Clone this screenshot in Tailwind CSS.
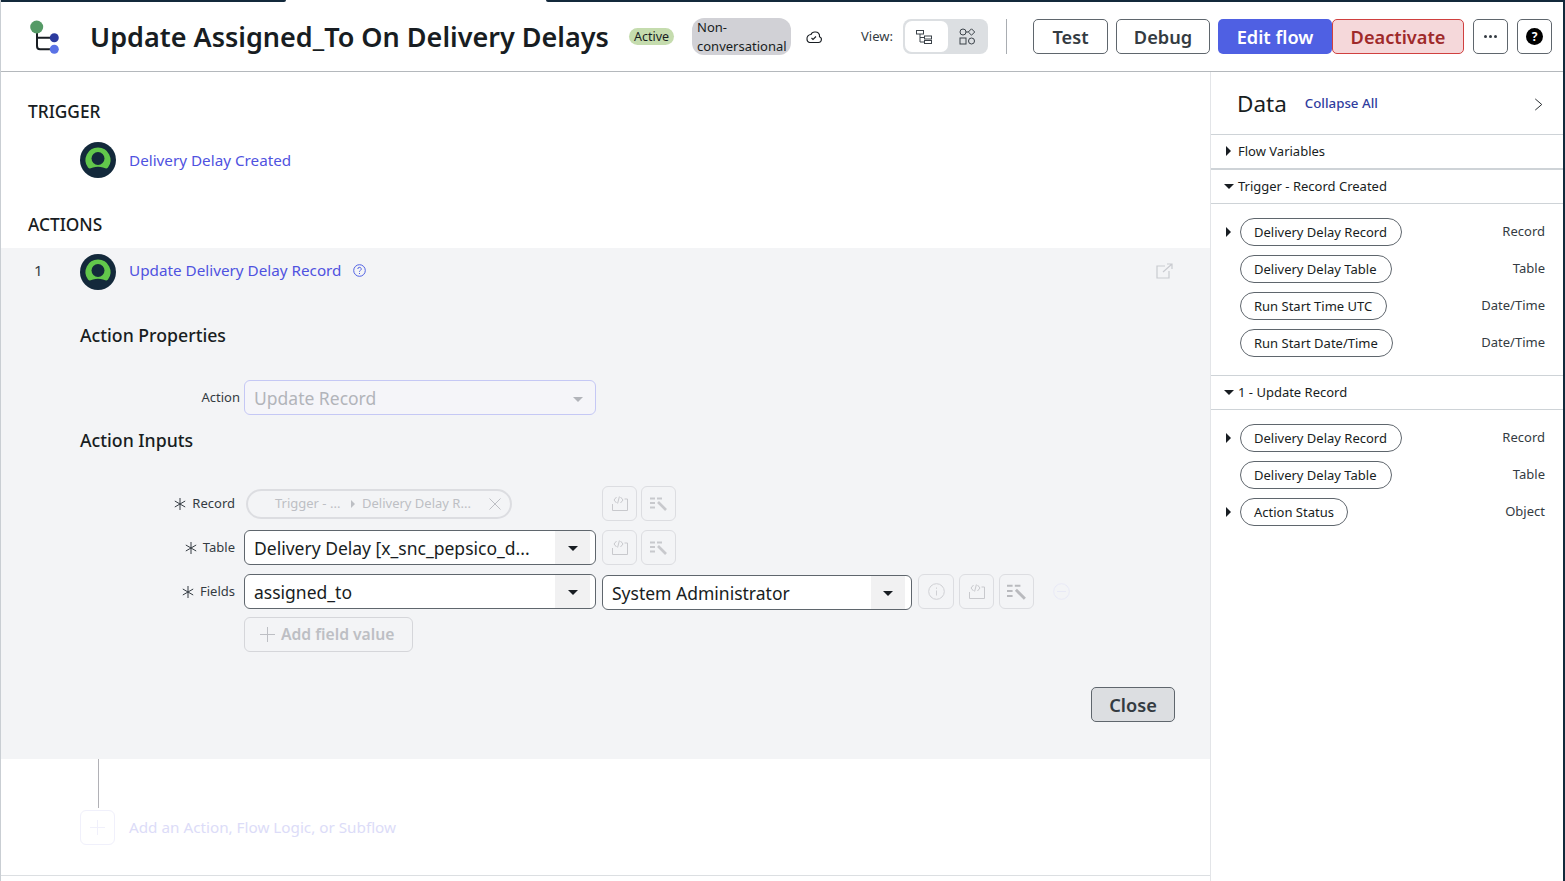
<!DOCTYPE html>
<html lang="en">
<head>
    <meta charset="UTF-8">
    <title>Update Assigned_To On Delivery Delays</title>
    <script src="https://cdn.jsdelivr.net/npm/@tailwindcss/browser@4"></script>
</head>
<body class="bg-white overflow-hidden font-['Noto_Sans',sans-serif] text-[#181d22]">
    <!-- shared icons -->
    <svg class="hidden">
        <symbol id="record-icon" viewBox="0 0 36 36">
            <circle cx="18" cy="18" r="18" fill="#13293b"/>
            <path d="M18 5.500a12.500 12.500 0 0 1 10 20c-1.500 1.800-3.500 0.500-5 0-3-1-7-1-10 0-1.500 0.500-3.500 1.800-5 0a12.500 12.500 0 0 1 10-20z" fill="#62c74b"/>
            <circle cx="18" cy="16.500" r="6.500" fill="#13293b"/>
        </symbol>
        <symbol id="code-icon" viewBox="0 0 16 15" fill="none" stroke="currentColor" stroke-width="1">
            <path d="M.5 8v6.500h15V3h-3"/>
            <path d="M4.500 1 2 4l2.500 3M8.500 1 11 4 8.500 7M7.400.5 5.600 7.500"/>
        </symbol>
        <symbol id="wizard-icon" viewBox="0 0 17 14" fill="none" stroke="currentColor" stroke-width="1.800">
            <path d="M0 1.500h5M7 1.500h5M0 6h5M0 10.500h5"/>
            <path d="M8 5l8 8" stroke-width="2.600"/>
        </symbol>
        <symbol id="required-icon" viewBox="0 0 12 12" fill="none" stroke="#343b42" stroke-width="1">
            <path d="M6 0v12M.8 3l10.400 6M.8 9l10.400-6"/>
        </symbol>
    </svg>

    <div class="relative h-[881px] w-[1565px] flex flex-col border-l border-[#c9ced3] border-r-2 border-r-[#13293b]">
        <div class="absolute top-0 left-0 w-[285px] h-[2px] bg-[#13293b] rounded-br"></div>
        <div class="absolute top-0 left-[545px] right-0 h-[2px] bg-[#13293b] rounded-bl"></div>

        <!-- Header -->
        <header class="h-[72px] shrink-0 border-b border-[#b4b8bc] flex items-center pt-[2px]">
            <svg class="ml-[28px] w-[32px] h-[36px] shrink-0" viewBox="0 0 32 36" fill="none">
                <path d="M8 8v19q0 3.300 3 3.300h12M8 18.700h14" stroke="#181d22" stroke-width="2"/>
                <circle cx="7.700" cy="8" r="6.500" fill="#559a66"/>
                <circle cx="25.300" cy="18.700" r="4.500" fill="#2b3a9e"/>
                <circle cx="25.300" cy="30.300" r="4.500" fill="#5a72e6"/>
            </svg>
            <h1 class="ml-[29px] text-[27px] leading-[36px] font-semibold whitespace-nowrap w-[539px] shrink-0 mt-[1px]">Update Assigned_To On Delivery Delays</h1>
            <span class="h-[17px] w-[45px] shrink-0 rounded-full bg-[#c5dcae] text-[12.500px] leading-[17px] text-center">Active</span>
            <span class="ml-[18px] h-[37px] w-[99px] shrink-0 rounded-[12px] bg-[#d1d1d6] pl-[5px] text-[13px] leading-[19px]">Non-<br>conversational</span>
            <svg class="ml-[14px] w-[18px] h-[14px] shrink-0" viewBox="0 0 18 14" fill="none" stroke="#181d22" stroke-width="1.100">
                <path d="M4 12.500h9.500a3 3 0 0 0 1-5.800 4 4 0 0 0-4.500-4.700 4 4 0 0 0-4 2.500 4 4 0 0 0-4 4.500 3.500 3.500 0 0 0 2.500 3.500z"/>
                <path d="M6.500 8l1.500 1.500 3-3"/>
            </svg>
            <span class="ml-[38px] text-[13px] w-[42px] shrink-0 text-[#343b42]">View:</span>
            <div class="h-[35px] w-[85px] shrink-0 rounded-[8px] bg-[#dcdfe2] p-[2px] flex">
                <div class="w-[43px] rounded-[7px] bg-white flex items-center justify-center pr-[6px]">
                    <svg class="w-[16px] h-[16px]" viewBox="0 0 16 16" fill="none" stroke="#3b4249" stroke-width="1">
                        <rect x="0.500" y="1.500" width="7" height="3.500"/>
                        <rect x="8.500" y="7" width="7" height="3"/>
                        <rect x="8.500" y="11.500" width="7" height="3"/>
                        <path d="M4 5v8h4.500M4 8.500h4.500"/>
                    </svg>
                </div>
                <div class="flex-1 flex items-center justify-center">
                    <svg class="w-[17px] h-[17px]" viewBox="0 0 17 17" fill="none" stroke="#3b4249" stroke-width="1">
                        <circle cx="4" cy="4" r="3"/>
                        <path d="M12.500 0.800l3.200 3.200-3.200 3.200-3.200-3.200zM7 4h2.300"/>
                        <rect x="1" y="10" width="6" height="6"/>
                        <circle cx="12.500" cy="13" r="3"/>
                    </svg>
                </div>
            </div>
            <div class="ml-[18px] h-[35px] w-px shrink-0 bg-[#a9adb2]"></div>
            <button class="ml-[26px] h-[35px] w-[75px] pt-[2px] shrink-0 rounded-[5px] border border-[#5f666d] text-[18.200px] font-semibold text-[#343b42]">Test</button>
            <button class="ml-[8px] h-[35px] w-[94px] pt-[2px] shrink-0 rounded-[5px] border border-[#5f666d] text-[18.200px] font-semibold text-[#343b42]">Debug</button>
            <button class="ml-[8px] h-[35px] w-[114px] pt-[2px] shrink-0 rounded-[5px] bg-[#4f60e3] text-[18.200px] font-semibold text-white">Edit flow</button>
            <button class="h-[35px] w-[132px] pt-[2px] shrink-0 rounded-[5px] border border-[#d0403f] bg-[#f5d8da] text-[18.200px] font-semibold text-[#9f2a2a]">Deactivate</button>
            <button class="ml-[9px] h-[35px] w-[35px] shrink-0 rounded-[5px] border border-[#5f666d] flex items-center justify-center gap-[2px]">
                <span class="w-[3px] h-[3px] rounded-full bg-[#343b42]"></span>
                <span class="w-[3px] h-[3px] rounded-full bg-[#343b42]"></span>
                <span class="w-[3px] h-[3px] rounded-full bg-[#343b42]"></span>
            </button>
            <button class="ml-[9px] h-[35px] w-[35px] shrink-0 rounded-[5px] border border-[#5f666d] flex items-center justify-center">
                <span class="w-[17px] h-[17px] rounded-full bg-black text-white text-[12px] leading-[17px] font-bold text-center">?</span>
            </button>
        </header>

        <div class="flex flex-1 min-h-0">
            <!-- Flow canvas -->
            <main class="w-[1209px] shrink-0">
                <h2 class="ml-[27px] mt-[28px] text-[17.300px] leading-[24px] font-medium">TRIGGER</h2>
                <div class="ml-[79px] mt-[18px] flex items-center h-[36px]">
                    <svg class="w-[36px] h-[36px]"><use href="#record-icon"/></svg>
                    <a class="ml-[13px] text-[15.250px] text-[#4f52e0]">Delivery Delay Created</a>
                </div>
                <h2 class="ml-[27px] mt-[35px] text-[17.300px] leading-[24px] font-medium">ACTIONS</h2>

                <section class="mt-[11px] h-[511px] bg-[#f3f4f6] pt-[6px]">
                    <div class="flex items-center h-[36px]">
                        <span class="ml-[33px] w-[46px] text-[15.250px] text-[#343b42] -mt-[3px]">1</span>
                        <svg class="w-[36px] h-[36px]"><use href="#record-icon"/></svg>
                        <a class="ml-[13px] text-[15.250px] text-[#4f52e0] -mt-[4px]">Update Delivery Delay Record</a>
                        <svg class="ml-[11px] w-[13px] h-[13px] -mt-[4px]" viewBox="0 0 13 13" fill="none" stroke="#4f60e3">
                            <circle cx="6.500" cy="6.500" r="5.800" stroke-width="1"/>
                            <path d="M4.800 5a1.700 1.700 0 1 1 2.500 1.500q-.8.500-.8 1.300M6.500 9v1" stroke-width="1"/>
                        </svg>
                        <svg class="ml-auto mr-[37px] w-[17px] h-[16px] -mt-[2px]" viewBox="0 0 17 16" fill="none" stroke="#c9cbd0" stroke-width="1.200">
                            <path d="M9 3H1v12h12V8M7 9l9-8M11 1h5v5"/>
                        </svg>
                    </div>

                    <h3 class="ml-[79px] mt-[32px] text-[17.700px] leading-[26px] font-medium">Action Properties</h3>

                    <div class="mt-[32px] flex items-center">
                        <label class="w-[243px] text-right text-[13px] pr-[4px] pt-[1px] text-[#343b42]">Action</label>
                        <div class="w-[352px] h-[35px] rounded-[6px] border border-[#c5c8f5] bg-[#f5f5f9] flex items-center pl-[9px] pr-[12px] text-[17.500px] text-[#b2b4ba]">
                            <span class="flex-1 pt-[1px]">Update Record</span>
                            <span class="w-0 h-0 border-x-[5px] border-x-transparent border-t-[5px] border-t-[#b2b4ba] mt-[3px]"></span>
                        </div>
                    </div>

                    <h3 class="ml-[79px] mt-[12px] text-[17.700px] leading-[26px] font-medium">Action Inputs</h3>

                    <!-- Record -->
                    <div class="mt-[33px] flex items-center h-[35px]">
                        <label class="w-[234px] flex items-center justify-end gap-[6px] text-[13px] text-[#343b42]"><svg class="w-[12px] h-[12px]"><use href="#required-icon"/></svg>Record</label>
                        <div class="ml-[11px] w-[266px] h-[30px] rounded-full border-2 border-[#dcdde1] flex items-center pl-[27px] text-[13px] text-[#bdbfc4]">
                            <span class="w-[76px]">Trigger - ...</span>
                            <span class="w-0 h-0 border-y-[4px] border-y-transparent border-l-[4px] border-l-[#bdbfc4] mr-[7px]"></span>
                            <span class="w-[127px] whitespace-nowrap">Delivery Delay R...</span>
                            <svg class="w-[12px] h-[12px]" viewBox="0 0 12 12" stroke="#bdbfc4" stroke-width="1"><path d="M0.500 0.500l11 11M11.500 0.500l-11 11"/></svg>
                        </div>
                        <div class="ml-[90px] flex gap-[4px]">
                            <div class="w-[35px] h-[35px] rounded-[6px] border border-[#dcdde1] flex items-center justify-center text-[#c8c9cd]"><svg class="w-[16px] h-[15px]"><use href="#code-icon"/></svg></div>
                            <div class="w-[35px] h-[35px] rounded-[6px] border border-[#dcdde1] flex items-center justify-center text-[#c8c9cd]"><svg class="w-[17px] h-[14px]"><use href="#wizard-icon"/></svg></div>
                        </div>
                    </div>

                    <!-- Table -->
                    <div class="mt-[9px] flex items-center h-[35px]">
                        <label class="w-[234px] flex items-center justify-end gap-[6px] text-[13px] text-[#343b42]"><svg class="w-[12px] h-[12px]"><use href="#required-icon"/></svg>Table</label>
                        <div class="ml-[9px] w-[352px] h-[35px] rounded-[6px] border border-[#5f666d] bg-white flex overflow-hidden pr-[5px]">
                            <span class="flex-1 pl-[9px] text-[17.500px] leading-[35px] whitespace-nowrap">Delivery Delay [x_snc_pepsico_d...</span>
                            <span class="w-[35px] bg-[#f1f1f2] flex items-center justify-center"><span class="w-0 h-0 border-x-[5px] border-x-transparent border-t-[5px] border-t-[#181d22] mt-[2px]"></span></span>
                        </div>
                        <div class="ml-[6px] flex gap-[4px]">
                            <div class="w-[35px] h-[35px] rounded-[6px] border border-[#dcdde1] flex items-center justify-center text-[#c8c9cd]"><svg class="w-[16px] h-[15px]"><use href="#code-icon"/></svg></div>
                            <div class="w-[35px] h-[35px] rounded-[6px] border border-[#dcdde1] flex items-center justify-center text-[#c8c9cd]"><svg class="w-[17px] h-[14px]"><use href="#wizard-icon"/></svg></div>
                        </div>
                    </div>

                    <!-- Fields -->
                    <div class="mt-[9px] flex items-center h-[35px]">
                        <label class="w-[234px] flex items-center justify-end gap-[6px] text-[13px] text-[#343b42]"><svg class="w-[12px] h-[12px]"><use href="#required-icon"/></svg>Fields</label>
                        <div class="ml-[9px] w-[352px] h-[35px] rounded-[6px] border border-[#5f666d] bg-white flex overflow-hidden pr-[5px]">
                            <span class="flex-1 pl-[9px] text-[17.500px] leading-[35px]">assigned_to</span>
                            <span class="w-[35px] bg-[#f1f1f2] flex items-center justify-center"><span class="w-0 h-0 border-x-[5px] border-x-transparent border-t-[5px] border-t-[#181d22] mt-[2px]"></span></span>
                        </div>
                        <div class="ml-[6px] w-[310px] h-[35px] rounded-[6px] border border-[#5f666d] bg-white flex overflow-hidden pr-[6px] mt-[1px]">
                            <span class="flex-1 pl-[9px] text-[17.500px] leading-[35px]">System Administrator</span>
                            <span class="w-[34px] bg-[#f1f1f2] flex items-center justify-center"><span class="w-0 h-0 border-x-[5px] border-x-transparent border-t-[5px] border-t-[#181d22] mt-[2px]"></span></span>
                        </div>
                        <div class="ml-[6px] flex gap-[5px]">
                            <div class="w-[36px] h-[35px] rounded-[6px] border border-[#dcdde1] flex items-center justify-center">
                                <svg class="w-[17px] h-[17px]" viewBox="0 0 17 17" fill="none" stroke="#cfd0d4"><circle cx="8.500" cy="8.500" r="7.800"/><path d="M8.500 7.500v5M8.500 4.500v1.300"/></svg>
                            </div>
                            <div class="w-[35px] h-[35px] rounded-[6px] border border-[#dcdde1] flex items-center justify-center text-[#c8c9cd]"><svg class="w-[16px] h-[15px]"><use href="#code-icon"/></svg></div>
                            <div class="w-[35px] h-[35px] rounded-[6px] border border-[#dcdde1] flex items-center justify-center text-[#b9babe]"><svg class="w-[19px] h-[16px]"><use href="#wizard-icon"/></svg></div>
                        </div>
                        <svg class="ml-[19px] w-[17px] h-[17px]" viewBox="0 0 17 17" fill="none" stroke="#e8e9f6"><circle cx="8.500" cy="8.500" r="7.800"/><path d="M4 8.500h9"/></svg>
                    </div>

                    <button class="ml-[243px] mt-[8px] w-[169px] h-[35px] rounded-[6px] border border-[#d5d6da] flex items-center pl-[15px] text-[15.700px] font-semibold text-[#bdbfc4]">
                        <svg class="w-[15px] h-[15px] mr-[6px]" viewBox="0 0 15 15" stroke="#bdbfc4"><path d="M7.500 0v15M0 7.500h15"/></svg>Add field value
                    </button>

                    <div class="flex justify-end pr-[35px] mt-[35px]">
                        <button class="w-[84px] h-[35px] pt-[2px] rounded-[5px] border border-[#5f666d] bg-[#dcdee1] text-[18.200px] font-semibold text-[#343b42]">Close</button>
                    </div>
                </section>

                <div class="ml-[97px] w-px h-[49px] bg-[#b1b1b6]"></div>
                <div class="ml-[79px] mt-[2px] flex items-center">
                    <div class="w-[35px] h-[35px] rounded-[6px] border border-[#f0f0fb] flex items-center justify-center">
                        <svg class="w-[15px] h-[15px]" viewBox="0 0 15 15" stroke="#f0f0fb"><path d="M7.500 0v15M0 7.500h15"/></svg>
                    </div>
                    <span class="ml-[14px] -mt-[1px] text-[15.250px] text-[#dcdcf8]">Add an Action, Flow Logic, or Subflow</span>
                </div>
                <div class="mt-[30px] h-px bg-[#dcdfe2]"></div>
            </main>

            <!-- Data panel -->
            <aside class="flex-1 min-w-0 border-l border-[#e3e5e8] text-[13px]">
                <div class="h-[63px] border-b border-[#ced3d7] flex items-center pt-[2px]">
                    <span class="ml-[26px] text-[22.500px] text-[#181d22]">Data</span>
                    <a class="ml-[18px] text-[13.300px] font-medium text-[#2f3c9e]">Collapse All</a>
                    <svg class="ml-auto mr-[20px] w-[9px] h-[13px]" viewBox="0 0 9 14" fill="none" stroke="#181d22"><path d="M1 1l7 6-7 6"/></svg>
                </div>
                <div class="h-[35px] border-b-2 border-[#ced3d7] flex items-center pl-[15px]">
                    <span class="w-0 h-0 border-y-[5px] border-y-transparent border-l-[5px] border-l-[#181d22] mr-[7px] -mt-[1px]"></span>Flow Variables
                </div>
                <div class="h-[34px] border-b border-[#ced3d7] flex items-center pl-[13px]">
                    <span class="w-0 h-0 border-x-[5px] border-x-transparent border-t-[5px] border-t-[#181d22] mr-[4px] -mt-[1px]"></span>Trigger - Record Created
                </div>
                <div class="h-[172px] border-b border-[#ced3d7] pt-[14px] pr-[18px] flex flex-col gap-[9px]">
                    <div class="flex items-center h-[28px]">
                        <span class="ml-[15px] w-0 h-0 border-y-[5px] border-y-transparent border-l-[5px] border-l-[#181d22] mr-[9px] -mt-[1px]"></span>
                        <span class="h-[28px] w-[162px] rounded-full border border-[#5f666d] pl-[13px] leading-[26px] whitespace-nowrap">Delivery Delay Record</span>
                        <span class="ml-auto text-[#343b42]">Record</span>
                    </div>
                    <div class="flex items-center h-[28px]">
                        <span class="ml-[29px] h-[28px] w-[152px] rounded-full border border-[#5f666d] pl-[13px] leading-[26px] whitespace-nowrap">Delivery Delay Table</span>
                        <span class="ml-auto text-[#343b42]">Table</span>
                    </div>
                    <div class="flex items-center h-[28px]">
                        <span class="ml-[29px] h-[28px] w-[147px] rounded-full border border-[#5f666d] pl-[13px] leading-[26px] whitespace-nowrap">Run Start Time UTC</span>
                        <span class="ml-auto text-[#343b42]">Date/Time</span>
                    </div>
                    <div class="flex items-center h-[28px]">
                        <span class="ml-[29px] h-[28px] w-[153px] rounded-full border border-[#5f666d] pl-[13px] leading-[26px] whitespace-nowrap">Run Start Date/Time</span>
                        <span class="ml-auto text-[#343b42]">Date/Time</span>
                    </div>
                </div>
                <div class="h-[34px] border-b border-[#ced3d7] flex items-center pl-[13px]">
                    <span class="w-0 h-0 border-x-[5px] border-x-transparent border-t-[5px] border-t-[#181d22] mr-[4px] -mt-[1px]"></span>1 - Update Record
                </div>
                <div class="pt-[14px] pr-[18px] flex flex-col gap-[9px]">
                    <div class="flex items-center h-[28px]">
                        <span class="ml-[15px] w-0 h-0 border-y-[5px] border-y-transparent border-l-[5px] border-l-[#181d22] mr-[9px] -mt-[1px]"></span>
                        <span class="h-[28px] w-[162px] rounded-full border border-[#5f666d] pl-[13px] leading-[26px] whitespace-nowrap">Delivery Delay Record</span>
                        <span class="ml-auto text-[#343b42]">Record</span>
                    </div>
                    <div class="flex items-center h-[28px]">
                        <span class="ml-[29px] h-[28px] w-[152px] rounded-full border border-[#5f666d] pl-[13px] leading-[26px] whitespace-nowrap">Delivery Delay Table</span>
                        <span class="ml-auto text-[#343b42]">Table</span>
                    </div>
                    <div class="flex items-center h-[28px]">
                        <span class="ml-[15px] w-0 h-0 border-y-[5px] border-y-transparent border-l-[5px] border-l-[#181d22] mr-[9px] -mt-[1px]"></span>
                        <span class="h-[28px] w-[108px] rounded-full border border-[#5f666d] pl-[13px] leading-[26px] whitespace-nowrap">Action Status</span>
                        <span class="ml-auto text-[#343b42]">Object</span>
                    </div>
                </div>
            </aside>
        </div>
    </div>
</body>
</html>
